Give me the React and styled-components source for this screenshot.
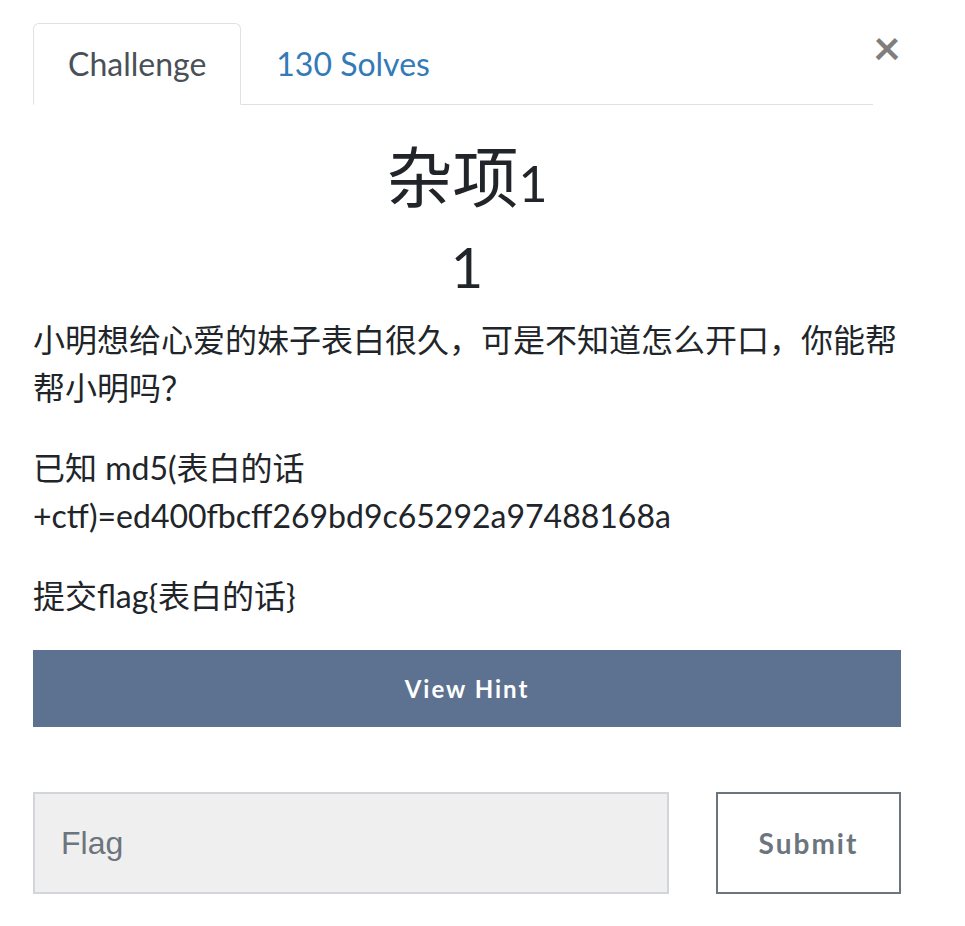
import React from 'react';
import styled, { createGlobalStyle } from 'styled-components';

const GlobalStyle = createGlobalStyle`
  html, body {
    margin: 0;
    padding: 0;
    background: #fff;
  }
  body {
    font-family: Lato, "Noto Sans CJK SC", sans-serif;
    color: #212529;
  }
`;

const Modal = styled.div`
  width: 868px;
  padding: 23px 0 0 33px;
`;

const Header = styled.div`
  display: flex;
  align-items: flex-start;
`;

const Tabs = styled.ul`
  flex: 1;
  display: flex;
  list-style: none;
  margin: 0;
  padding: 0;
  border-bottom: 1px solid #dee2e6;
`;

const Tab = styled.li`
  margin-bottom: -1px;
  padding: 16px 34px 16px 34px;
  font-size: 32px;
  line-height: 48px;
  border: 1px solid ${(p) => (p.active ? '#dee2e6' : 'transparent')};
  border-bottom-color: ${(p) => (p.active ? '#fff' : 'transparent')};
  border-radius: 6px 6px 0 0;
  background: ${(p) => (p.active ? '#fff' : 'transparent')};
  color: ${(p) => (p.active ? '#495057' : '#337ab7')};
  cursor: pointer;
`;

const Close = styled.button`
  width: 28px;
  margin-top: 0;
  padding: 0;
  border: 0;
  background: none;
  font-family: Lato, sans-serif;
  font-size: 48px;
  font-weight: 700;
  line-height: 48px;
  color: #000;
  opacity: 0.5;
  text-align: center;
  cursor: pointer;
`;

const Title = styled.h2`
  margin: 36px 0 0;
  font-weight: 400;
  font-size: 50px;
  line-height: 72px;
  text-align: center;
`;

const Han = styled.span`
  font-size: 66px;
`;

const Value = styled.h3`
  margin: 18px 0 0;
  font-weight: 400;
  font-size: 56px;
  line-height: 60px;
  text-align: center;
`;

const Description = styled.div`
  margin-top: 19px;
  font-size: 32px;
  line-height: 48px;
`;

const Para = styled.p`
  margin: 0 0 32px;

  &:last-child {
    margin-bottom: 0;
  }
`;

const HintButton = styled.button`
  display: block;
  width: 100%;
  height: 77px;
  margin-top: 30px;
  border: 0;
  background: #5c7290;
  color: #fff;
  font-family: Lato, sans-serif;
  font-size: 24px;
  font-weight: 700;
  letter-spacing: 2px;
  cursor: pointer;
`;

const SubmitRow = styled.div`
  display: grid;
  grid-template-columns: 636px 185px;
  justify-content: space-between;
  margin-top: 65px;
`;

const FlagInput = styled.input`
  box-sizing: border-box;
  height: 102px;
  padding: 0 26px;
  border: 2px solid #d2d6db;
  background: #efefef;
  font-family: "Liberation Sans", Arial, sans-serif;
  font-size: 32px;
  color: #495057;
  outline: none;

  &::placeholder {
    color: #6c757d;
  }
`;

const SubmitButton = styled.button`
  box-sizing: border-box;
  height: 102px;
  border: 2px solid #6c757d;
  background: #fff;
  color: #6c757d;
  font-family: Lato, sans-serif;
  font-size: 28px;
  font-weight: 700;
  letter-spacing: 2px;
  cursor: pointer;
`;

export default function App() {
  return (
    <>
      <GlobalStyle />
      <Modal>
        <Header>
          <Tabs>
            <Tab active>Challenge</Tab>
            <Tab>130 Solves</Tab>
          </Tabs>
          <Close aria-label="Close">×</Close>
        </Header>

        <Title>
          <Han>杂项</Han>1
        </Title>
        <Value>1</Value>

        <Description>
          <Para>小明想给心爱的妹子表白很久，可是不知道怎么开口，你能帮帮小明吗？</Para>
          <Para>已知 md5(表白的话+ctf)=ed400fbcff269bd9c65292a97488168a</Para>
          <Para>提交flag{'{'}表白的话{'}'}</Para>
        </Description>

        <HintButton>View Hint</HintButton>

        <SubmitRow>
          <FlagInput placeholder="Flag" />
          <SubmitButton>Submit</SubmitButton>
        </SubmitRow>
      </Modal>
    </>
  );
}
